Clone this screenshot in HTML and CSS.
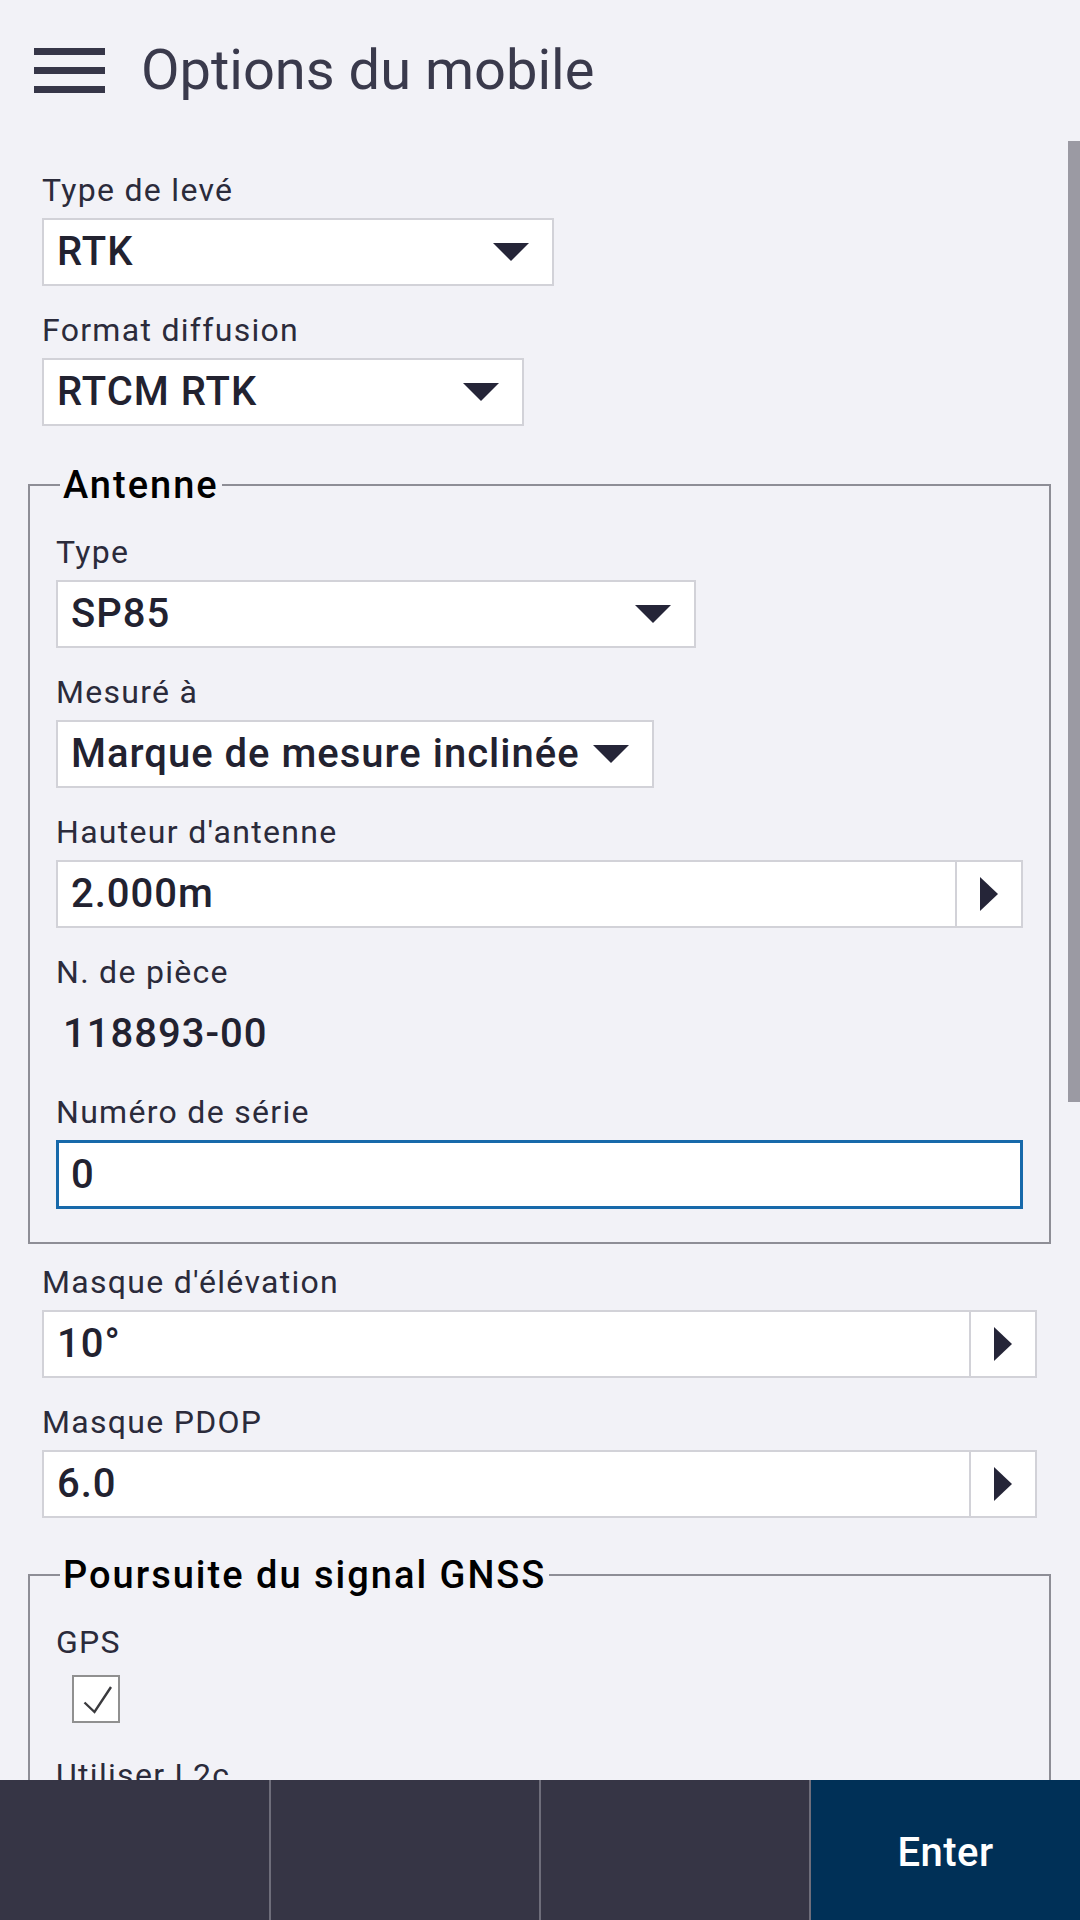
FILE: index.html
```html
<!DOCTYPE html>
<html lang="fr">
<head>
<meta charset="utf-8">
<title>Options du mobile</title>
<link rel="stylesheet" href="styles.css">
</head>
<body>
<div class="app">
  <header class="topbar">
    <div class="menu" aria-label="Menu"><span></span><span></span><span></span></div>
    <h1 class="title">Options du mobile</h1>
  </header>

  <main class="content">
    <div class="form">
      <div class="field">
        <div class="lbl">Type de levé</div>
        <div class="select w-survey"><span class="val">RTK</span><svg class="caret" viewBox="0 0 36 18"><polygon points="0,0 36,0 18,18"/></svg></div>
      </div>
      <div class="field">
        <div class="lbl">Format diffusion</div>
        <div class="select w-format"><span class="val">RTCM RTK</span><svg class="caret" viewBox="0 0 36 18"><polygon points="0,0 36,0 18,18"/></svg></div>
      </div>

      <fieldset class="group">
        <legend>Antenne</legend>
        <div class="field">
          <div class="lbl">Type</div>
          <div class="select w-type"><span class="val">SP85</span><svg class="caret" viewBox="0 0 36 18"><polygon points="0,0 36,0 18,18"/></svg></div>
        </div>
        <div class="field">
          <div class="lbl">Mesuré à</div>
          <div class="select w-measured"><span class="val">Marque de mesure inclinée</span><svg class="caret" viewBox="0 0 36 18"><polygon points="0,0 36,0 18,18"/></svg></div>
        </div>
        <div class="field">
          <div class="lbl">Hauteur d'antenne</div>
          <div class="stepper"><span class="val">2.000m</span><span class="go"><svg class="arrow" viewBox="0 0 18 34"><polygon points="0,0 18,17 0,34"/></svg></span></div>
        </div>
        <div class="field">
          <div class="lbl">N. de pièce</div>
          <div class="static"><span class="val">118893-00</span></div>
        </div>
        <div class="field">
          <div class="lbl">Numéro de série</div>
          <div class="input focused"><span class="val">0</span></div>
        </div>
      </fieldset>

      <div class="field after-group">
        <div class="lbl">Masque d'élévation</div>
        <div class="stepper"><span class="val">10°</span><span class="go"><svg class="arrow" viewBox="0 0 18 34"><polygon points="0,0 18,17 0,34"/></svg></span></div>
      </div>
      <div class="field">
        <div class="lbl">Masque PDOP</div>
        <div class="stepper"><span class="val">6.0</span><span class="go"><svg class="arrow" viewBox="0 0 18 34"><polygon points="0,0 18,17 0,34"/></svg></span></div>
      </div>

      <fieldset class="group group-gnss">
        <legend>Poursuite du signal GNSS</legend>
        <div class="field">
          <div class="lbl">GPS</div>
          <div class="check"><svg viewBox="0 0 44 44"><polyline points="10.5,25.5 20.5,35 37,10"/></svg></div>
        </div>
        <div class="field field-loose">
          <div class="lbl">Utiliser L2c</div>
          <div class="check"><svg viewBox="0 0 44 44"><polyline points="10.5,25.5 20.5,35 37,10"/></svg></div>
        </div>
      </fieldset>
    </div>
    <div class="scrollbar"></div>
  </main>

  <footer class="softkeys">
    <div class="key"></div>
    <div class="key"></div>
    <div class="key"></div>
    <div class="key key-primary">Enter</div>
  </footer>
</div>
</body>
</html>
```

FILE: styles.css
```css
* { box-sizing: border-box; }

html, body {
  margin: 0;
  padding: 0;
  background: #f2f2f7;
}

body {
  font-family: Roboto, "Noto Sans", "Liberation Sans", sans-serif;
  color: #2a2a3a;
}

.app {
  width: 1080px;
  height: 1920px;
  display: flex;
  flex-direction: column;
  overflow: hidden;
}

/* Header */
.topbar {
  height: 140px;
  flex: 0 0 140px;
  display: flex;
  align-items: center;
  padding-left: 34px;
  gap: 36px;
}

.menu {
  width: 71px;
  display: flex;
  flex-direction: column;
  gap: 12px;
}

.menu span {
  display: block;
  height: 7px;
  background: #363648;
}

.title {
  margin: 0;
  font-size: 56px;
  font-weight: 400;
  line-height: 64px;
  color: #3a3a4c;
}

/* Content */
.content {
  flex: 1 1 auto;
  position: relative;
  overflow: hidden;
}

.form {
  padding: 31px 43px 0 42px;
}

.field + .field {
  margin-top: 25px;
}

.lbl {
  font-size: 32px;
  line-height: 38px;
  letter-spacing: 1.3px;
  color: #2b2b3b;
  margin-bottom: 9px;
  white-space: nowrap;
}

.val {
  font-size: 40px;
  font-weight: 500;
  line-height: 46px;
  letter-spacing: 1px;
  color: #222230;
  white-space: nowrap;
}

.select {
  height: 68px;
  background: #fff;
  border: 2px solid #d2d2d8;
  display: flex;
  align-items: center;
  justify-content: space-between;
  padding: 0 23px 0 13px;
}

.caret {
  width: 36px;
  height: 18px;
  fill: #252538;
  flex: 0 0 auto;
}

.w-survey { width: 512px; }
.w-format { width: 482px; }
.w-type { width: 640px; }
.w-measured { width: 598px; }

.stepper {
  height: 68px;
  background: #fff;
  border: 2px solid #d2d2d8;
  display: flex;
  align-items: stretch;
}

.stepper .val {
  flex: 1 1 auto;
  display: flex;
  align-items: center;
  padding-left: 13px;
}

.go {
  width: 68px;
  flex: 0 0 66px;
  border-left: 2px solid #d2d2d8;
  display: flex;
  align-items: center;
  justify-content: center;
}

.arrow {
  width: 18px;
  height: 34px;
  fill: #252538;
}

.static {
  height: 68px;
  display: flex;
  align-items: center;
  padding-left: 7px;
}

.input {
  height: 69px;
  background: #fff;
  border: 2px solid #d2d2d8;
  display: flex;
  align-items: center;
  padding-left: 13px;
}

.input.focused {
  border: 3px solid #1769aa;
  padding-left: 12px;
}

/* Groups */
.group {
  margin: 40px -14px 0 -14px;
  border: 2px solid #8e8e96;
  padding: 29px 26px 33px 26px;
  min-width: 0;
}

.group legend {
  margin-left: 4px;
  padding: 0 3px;
  font-size: 38px;
  font-weight: 500;
  line-height: 38px;
  letter-spacing: 2px;
  color: #000;
  white-space: nowrap;
}

.group-gnss {
  margin-top: 38px;
}

.after-group {
  margin-top: 19px;
}

.check {
  width: 48px;
  height: 48px;
  margin-left: 16px;
  margin-top: 14px;
  background: #fff;
  border: 2px solid #909090;
}

.check svg {
  display: block;
  width: 44px;
  height: 44px;
  fill: none;
  stroke: #3a3a3e;
  stroke-width: 2.4;
}

.field-loose {
  margin-top: 33px !important;
}

/* Scrollbar overlay */
.scrollbar {
  position: absolute;
  right: 0;
  top: 1px;
  width: 12px;
  height: 961px;
  background: #9b9aa3;
}

/* Softkeys */
.softkeys {
  flex: 0 0 140px;
  height: 140px;
  display: grid;
  grid-template-columns: 269px 270px 270px 271px;
  background: #363545;
}

.key + .key {
  border-left: 2px solid #6e6d7a;
}

.key-primary {
  background: #003057;
  color: #fff;
  font-size: 40px;
  font-weight: 500;
  letter-spacing: 0.5px;
  display: flex;
  align-items: center;
  justify-content: center;
  padding-top: 4px;
}
```
